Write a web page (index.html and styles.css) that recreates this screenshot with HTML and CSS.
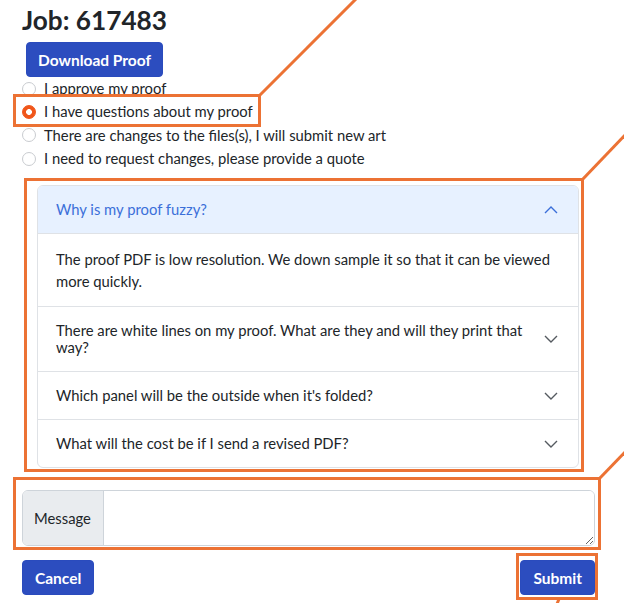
FILE: index.html
```html
<!DOCTYPE html>
<html lang="en">
<head>
<meta charset="utf-8">
<title>Job 617483</title>
<link rel="stylesheet" href="styles.css">
</head>
<body>
<main class="page">
  <h1 class="job-title">Job: 617483</h1>
  <button class="btn btn-primary btn-download" type="button">Download Proof</button>

  <div class="choices">
    <label class="choice"><input type="radio" name="proof" class="radio"><span>I approve my proof</span></label>
    <label class="choice"><input type="radio" name="proof" class="radio" checked><span>I have questions about my proof</span></label>
    <label class="choice"><input type="radio" name="proof" class="radio"><span>There are changes to the files(s), I will submit new art</span></label>
    <label class="choice"><input type="radio" name="proof" class="radio"><span>I need to request changes, please provide a quote</span></label>
  </div>

  <section class="accordion">
    <div class="acc-item">
      <div class="acc-header open">
        <span class="acc-q">Why is my proof fuzzy?</span>
        <svg class="chev" width="16" height="16" viewBox="0 0 16 16"><path d="M2 11 L8 5 L14 11" fill="none" stroke="currentColor" stroke-width="1.4"/></svg>
      </div>
      <div class="acc-body">The proof PDF is low resolution. We down sample it so that it can be viewed more quickly.</div>
    </div>
    <div class="acc-item">
      <div class="acc-header">
        <span class="acc-q">There are white lines on my proof. What are they and will they print that way?</span>
        <svg class="chev" width="16" height="16" viewBox="0 0 16 16"><path d="M2 5 L8 11 L14 5" fill="none" stroke="currentColor" stroke-width="1.4"/></svg>
      </div>
    </div>
    <div class="acc-item">
      <div class="acc-header">
        <span class="acc-q">Which panel will be the outside when it's folded?</span>
        <svg class="chev" width="16" height="16" viewBox="0 0 16 16"><path d="M2 5 L8 11 L14 5" fill="none" stroke="currentColor" stroke-width="1.4"/></svg>
      </div>
    </div>
    <div class="acc-item">
      <div class="acc-header">
        <span class="acc-q">What will the cost be if I send a revised PDF?</span>
        <svg class="chev" width="16" height="16" viewBox="0 0 16 16"><path d="M2 5 L8 11 L14 5" fill="none" stroke="currentColor" stroke-width="1.4"/></svg>
      </div>
    </div>
  </section>

  <div class="input-group">
    <span class="input-label">Message</span>
    <textarea class="message" aria-label="Message"></textarea>
  </div>

  <div class="actions">
    <button class="btn btn-primary" type="button">Cancel</button>
    <button class="btn btn-primary" type="button">Submit</button>
  </div>

  <svg class="annotations" width="624" height="603" viewBox="0 0 624 603" aria-hidden="true">
    <g fill="none" stroke="#ec7234" stroke-width="3">
      <rect x="14.5" y="95.5" width="245" height="30"/>
      <line x1="259" y1="96" x2="356" y2="-1"/>
      <rect x="25.5" y="179.5" width="557" height="291"/>
      <line x1="582" y1="180" x2="626" y2="134"/>
      <rect x="14.5" y="478.5" width="585" height="70"/>
      <line x1="599" y1="479" x2="626" y2="451"/>
      <rect x="517.5" y="554.5" width="79" height="44"/>
      <line x1="559" y1="599" x2="557" y2="604"/>
    </g>
  </svg>
</main>
</body>
</html>
```

FILE: styles.css
```css
* { box-sizing: border-box; }

html, body {
  margin: 0;
  padding: 0;
  background: #fff;
}

body {
  font-family: Lato, "Noto Sans", "DejaVu Sans", sans-serif;
  font-size: 14.8px;
  color: #212529;
}

.page {
  position: relative;
  width: 624px;
  height: 603px;
  overflow: hidden;
  padding: 4px 29px 0 22px;
}

.job-title {
  margin: 0 0 6px;
  font-size: 26.2px;
  line-height: 32px;
  font-weight: 700;
  color: #212529;
}

.btn {
  font-family: inherit;
  font-weight: 700;
  font-size: 15.5px;
  color: #fff;
  border: 1px solid #2a4bbd;
  border-radius: 4px;
  cursor: pointer;
}

.btn-primary {
  background: #2c4dbf;
}

.btn-download {
  display: block;
  margin-left: 4px;
  width: 137px;
  height: 35px;
  padding: 0;
}

.choices {
  display: flex;
  flex-direction: column;
  margin-bottom: 15px;
}

.choice {
  display: flex;
  align-items: center;
  gap: 8px;
  height: 23.3px;
  line-height: 23.3px;
}

.radio {
  appearance: none;
  -webkit-appearance: none;
  margin: 0;
  width: 14px;
  height: 14px;
  border: 1px solid #c9ccd0;
  border-radius: 50%;
  background: #fff;
  flex: none;
}

.radio:checked {
  border-color: #f0561a;
  background: radial-gradient(circle, #fff 0 2.6px, #f0561a 3.2px);
}

.accordion {
  margin: 0 16px 22px 15px;
  border: 1px solid #dfe2e6;
  border-radius: 6px;
  overflow: hidden;
}

.acc-item + .acc-item {
  border-top: 1px solid #dfe2e6;
}

.acc-header {
  display: flex;
  align-items: center;
  justify-content: space-between;
  gap: 18px;
  padding: 15px 19px 15px 18px;
  line-height: 17px;
  color: #212529;
}

.acc-header.open {
  background: #e7f1ff;
  color: #3b6fd9;
  border-bottom: 1px solid #dfe2e6;
}

.chev {
  flex: none;
  color: #555a60;
}

.acc-header.open .chev {
  color: #3b6fd9;
}

.acc-body {
  padding: 14px 19px 14px 18px;
  line-height: 22px;
}

.input-group {
  display: flex;
  height: 56px;
  border: 1px solid #ced4da;
  border-radius: 6px;
  overflow: hidden;
}

.input-label {
  display: flex;
  align-items: center;
  padding: 0 11px;
  width: 81px;
  background: #e9ecef;
  border-right: 1px solid #ced4da;
  color: #212529;
}

.message {
  flex: 1;
  border: none;
  margin: 0;
  padding: 6px 12px;
  font-family: inherit;
  font-size: 14.8px;
  resize: vertical;
  outline: none;
}

.actions {
  display: flex;
  justify-content: space-between;
  margin-top: 14px;
}

.actions .btn {
  height: 35px;
  padding: 0 12px;
}

.annotations {
  position: absolute;
  left: 0;
  top: 0;
  pointer-events: none;
}
```
